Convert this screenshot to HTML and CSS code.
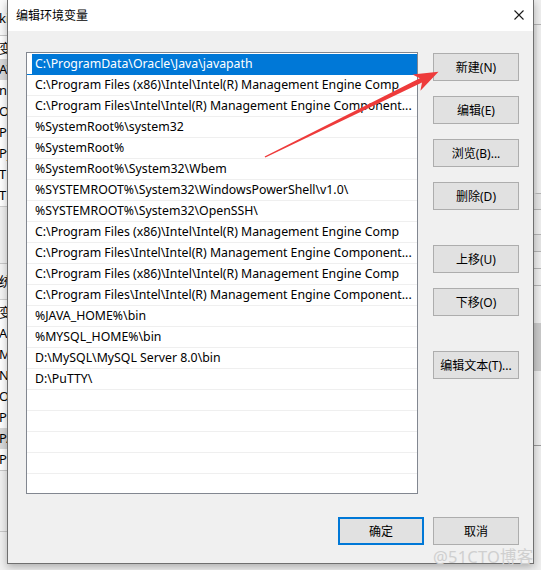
FILE: index.html
```html
<!DOCTYPE html>
<html lang="zh-CN">
<head>
<meta charset="utf-8">
<title>编辑环境变量</title>
<link rel="stylesheet" href="styles.css">
</head>
<body>
<div class="desk">
  <div class="bgwin bg-left">
    <div class="bg-top">ki</div>
    <div class="bg-list">
      <div class="bg-row">变</div>
      <div class="bg-row hl">AV</div>
      <div class="bg-row">ni</div>
      <div class="bg-row">Or</div>
      <div class="bg-row">Pa</div>
      <div class="bg-row">Py</div>
      <div class="bg-row">TE</div>
      <div class="bg-row">TM</div>
    </div>
    <div class="bg-gap"></div>
    <div class="bg-head">统</div>
    <div class="bg-list">
      <div class="bg-row">变</div>
      <div class="bg-row">A</div>
      <div class="bg-row">M</div>
      <div class="bg-row">N</div>
      <div class="bg-row">O</div>
      <div class="bg-row">Pa</div>
      <div class="bg-row hl">PA</div>
      <div class="bg-row">PF</div>
    </div>
    <div class="bg-foot"></div>
  </div>

  <div class="bgwin bg-right">
    <div class="rs rs-a"></div>
    <div class="rs rs-b"></div>
    <div class="rs rs-c"></div>
    <div class="rs rs-d"></div>
    <div class="rs rs-e"></div>
    <div class="rs rs-f"></div>
    <div class="rs rs-g"></div>
    <div class="rs rs-h"></div>
  </div>

  <div class="dialog">
    <div class="titlebar">
      <span class="title">编辑环境变量</span>
      <svg class="close" width="10" height="10" viewBox="0 0 10 10"><path d="M0.5 0.5 L9.5 9.5 M9.5 0.5 L0.5 9.5" stroke="#1a1a1a" stroke-width="1.1" fill="none"/></svg>
    </div>
    <div class="body">
      <div class="main">
        <div class="list">
          <div class="row sel"><span class="cell">C:\ProgramData\Oracle\Java\javapath</span></div>
          <div class="row"><span class="cell">C:\Program Files (x86)\Intel\Intel(R) Management Engine Comp</span></div>
          <div class="row"><span class="cell">C:\Program Files\Intel\Intel(R) Management Engine Component...</span></div>
          <div class="row"><span class="cell">%SystemRoot%\system32</span></div>
          <div class="row"><span class="cell">%SystemRoot%</span></div>
          <div class="row"><span class="cell">%SystemRoot%\System32\Wbem</span></div>
          <div class="row"><span class="cell">%SYSTEMROOT%\System32\WindowsPowerShell\v1.0\</span></div>
          <div class="row"><span class="cell">%SYSTEMROOT%\System32\OpenSSH\</span></div>
          <div class="row"><span class="cell">C:\Program Files (x86)\Intel\Intel(R) Management Engine Comp</span></div>
          <div class="row"><span class="cell">C:\Program Files\Intel\Intel(R) Management Engine Component...</span></div>
          <div class="row"><span class="cell">C:\Program Files (x86)\Intel\Intel(R) Management Engine Comp</span></div>
          <div class="row"><span class="cell">C:\Program Files\Intel\Intel(R) Management Engine Component...</span></div>
          <div class="row"><span class="cell">%JAVA_HOME%\bin</span></div>
          <div class="row"><span class="cell">%MYSQL_HOME%\bin</span></div>
          <div class="row"><span class="cell">D:\MySQL\MySQL Server 8.0\bin</span></div>
          <div class="row"><span class="cell">D:\PuTTY\</span></div>
          <div class="row"><span class="cell"></span></div>
          <div class="row"><span class="cell"></span></div>
          <div class="row"><span class="cell"></span></div>
          <div class="row"><span class="cell"></span></div>
          <div class="row"><span class="cell"></span></div>
        </div>
        <div class="side">
          <button class="btn">新建(N)</button>
          <button class="btn">编辑(E)</button>
          <button class="btn">浏览(B)...</button>
          <button class="btn">删除(D)</button>
          <button class="btn group">上移(U)</button>
          <button class="btn">下移(O)</button>
          <button class="btn group">编辑文本(T)...</button>
        </div>
      </div>
      <div class="footer">
        <button class="btn default">确定</button>
        <button class="btn">取消</button>
      </div>
    </div>
  </div>

  <svg class="arrow" width="541" height="570" viewBox="0 0 541 570">
    <polygon points="264.6,156.4 419.8,78.2 412.5,74.5 438.5,71.8 420.4,90.7 422,82.6 265.4,157.6" fill="#ee3b3b"/>
  </svg>

  <div class="watermark">@51CTO博客</div>
</div>
</body>
</html>
```

FILE: styles.css
```css
* { box-sizing: border-box; }

body {
  margin: 0;
  font-family: "Noto Sans", "Noto Sans CJK SC", sans-serif;
  font-size: 12px;
  color: #000;
}

.desk {
  position: relative;
  width: 541px;
  height: 570px;
  overflow: hidden;
  background: #f0f0f0;
}

/* background windows peeking out at the sides */
.bgwin {
  position: absolute;
  top: 0;
  height: 570px;
  overflow: hidden;
}

.bg-left {
  left: 0;
  width: 8px;
  display: flex;
  flex-direction: column;
  background: #f0f0f0;
}

.bg-top {
  height: 36px;
  padding-top: 9px;
  background: #f9f9f9;
  border-bottom: 1px solid #c8c8c8;
  line-height: 18px;
  margin-left: -1px;
  font-size: 13px;
}

.bg-list {
  background: #fff;
  padding-top: 2px;
}

.bg-row {
  height: 21px;
  line-height: 21px;
  font-size: 13px;
  white-space: nowrap;
  margin-left: -1px;
}

.bg-row.hl { background: #d9d9d9; }

.bg-gap {
  height: 58px;
  border-top: 1px solid #d0d0d0;
  border-bottom: 1px solid #c8c8c8;
  background: #f0f0f0;
}

.bg-head {
  height: 36px;
  line-height: 34px;
  font-size: 13px;
  border-bottom: 1px solid #d0d0d0;
  margin-left: -1px;
  background: #f4f4f4;
}

.bg-foot {
  height: 62px;
  border-top: 1px solid #c8c8c8;
  border-bottom: 1px solid #c8c8c8;
}

.bg-right {
  left: 534px;
  width: 7px;
  background: #eeeeee;
  display: flex;
  flex-direction: column;
}

.rs { border-bottom: 1px solid #b4b4b4; }
.rs-a { height: 25px; }
.rs-b { height: 169px; border-left: 3px solid #e6e6e6; }
.rs-c { height: 16px; background: #e4e4e4; }
.rs-d { height: 25px; }
.rs-e { height: 17px; background: #e4e4e4; }
.rs-f { height: 17px; }
.rs-g { height: 17px; }
.rs-h { height: 160px; border-bottom-color: #9a9a9a; background: linear-gradient(to bottom, #eeeeee 0 37px, #c9c9c9 37px 85px, #eeeeee 85px); }

/* dialog */
.dialog {
  position: absolute;
  left: 7px;
  top: 0;
  width: 527px;
  height: 564px;
  border: 1px solid #6f6f6f;
  border-top: none;
  background: #f0f0f0;
  display: flex;
  flex-direction: column;
  box-shadow: 0 3px 8px rgba(0, 0, 0, 0.28);
}

.titlebar {
  height: 31px;
  background: #fff;
  display: flex;
  align-items: center;
  justify-content: space-between;
  padding: 0 9px 1px 8px;
}

.title {
  font-size: 12px;
  color: #000;
}

.close { display: block; }

.body {
  flex: 1;
  display: flex;
  flex-direction: column;
  padding: 21px 14px 0 18px;
}

.main {
  display: flex;
  align-items: flex-start;
}

.list {
  width: 392px;
  height: 442px;
  border: 1px solid #828790;
  background: #fff;
  padding-top: 1px;
  overflow: hidden;
}

.row {
  height: 21px;
  padding-left: 1px;
  border-bottom: 1px solid #efefef;
}

.cell {
  display: block;
  height: 20px;
  margin-left: 4px;
  padding-left: 3px;
  line-height: 20px;
  font-size: 12.3px;
  white-space: nowrap;
  overflow: hidden;
  color: #000;
}

.row.sel { border-bottom-color: #0078d7; }
.row.sel .cell {
  background: #0078d7;
  color: #fff;
  height: 21px;
}

.side {
  margin-left: 15px;
  padding-top: 1px;
  display: flex;
  flex-direction: column;
  gap: 15px;
}

.btn {
  width: 86px;
  height: 28px;
  border: 1px solid #adadad;
  background: #e1e1e1;
  font-family: "Noto Sans", "Noto Sans CJK SC", sans-serif;
  font-size: 12px;
  color: #000;
  padding: 0;
  margin: 0;
}

.btn.group { margin-top: 20px; }

.footer {
  display: flex;
  justify-content: flex-end;
  gap: 9px;
  margin-top: 23px;
}

.btn.default {
  border: 2px solid #0078d7;
}

.arrow {
  position: absolute;
  left: 0;
  top: 0;
  pointer-events: none;
}

.watermark {
  position: absolute;
  left: 433px;
  top: 544px;
  font-size: 16.5px;
  color: #cfcfcf;
  letter-spacing: 0.2px;
  white-space: nowrap;
}
```
